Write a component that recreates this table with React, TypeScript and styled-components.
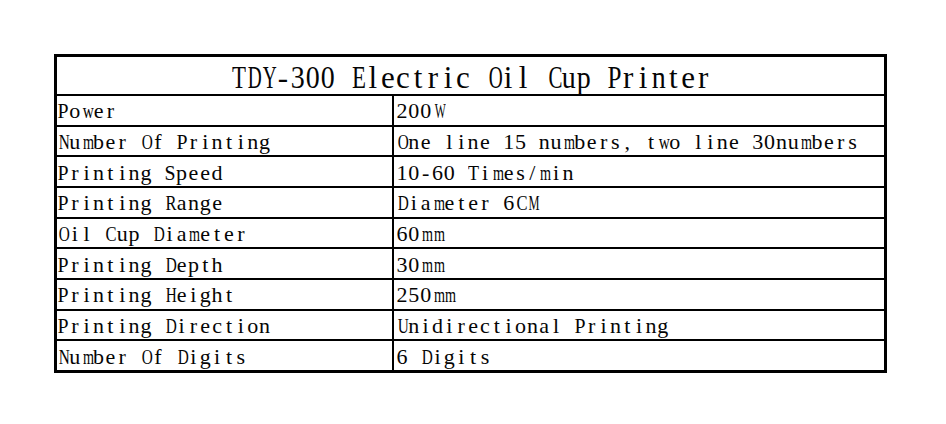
import React from "react";
import styled, { createGlobalStyle } from "styled-components";

const GlobalStyle = createGlobalStyle`
  html, body {
    margin: 0;
    padding: 0;
    background: #ffffff;
  }
  body {
    width: 946px;
    height: 424px;
    overflow: hidden;
  }
`;

const Page = styled.div`
  padding: 54px 0 0 54px;
  box-sizing: border-box;
  width: 946px;
  height: 424px;
  font-family: "Liberation Serif", "Times New Roman", serif;
  color: #050505;
`;

const Table = styled.div`
  width: 833px;
  box-sizing: border-box;
  border: 3px solid #000;
  display: flex;
  flex-direction: column;
`;

const Title = styled.div`
  height: 37px;
  display: flex;
  align-items: center;
  justify-content: center;
  font-size: 31px;
  line-height: 1;
  border-bottom: 2px solid #000;
`;

const Row = styled.div<{ $last?: boolean }>`
  display: grid;
  grid-template-columns: 337px 1fr;
  height: 28.67px;
  border-bottom: ${(p) => (p.$last ? "none" : "2px solid #000")};
`;

const Cell = styled.div<{ $divider?: boolean; $pad: number }>`
  display: flex;
  align-items: center;
  padding-left: ${(p) => p.$pad}px;
  font-size: 22px;
  line-height: 1;
  border-right: ${(p) => (p.$divider ? "2px solid #000" : "none")};
  overflow: hidden;
  white-space: nowrap;
`;

const Line = styled.span<{ $shift: number }>`
  display: inline-flex;
  transform: translateY(${(p) => p.$shift}px);
`;

const Glyph = styled.span<{ $cell: number }>`
  display: inline-block;
  width: ${(p) => p.$cell}px;
  text-align: center;
  white-space: pre;
  transform-origin: center;
`;

// Times-metric advance widths (em) for the characters in use
const WIDTHS: Record<string, number> = {
  " ": 0.25, ",": 0.25, "-": 0.333, "/": 0.278,
  A: 0.722, B: 0.667, C: 0.667, D: 0.722, E: 0.611, F: 0.556, G: 0.722,
  H: 0.722, I: 0.333, L: 0.611, M: 0.889, N: 0.722, O: 0.722, P: 0.556,
  R: 0.667, S: 0.556, T: 0.611, U: 0.722, W: 0.944, Y: 0.722,
  a: 0.444, b: 0.5, c: 0.444, d: 0.5, e: 0.444, f: 0.333, g: 0.5, h: 0.5,
  i: 0.278, l: 0.278, m: 0.778, n: 0.5, o: 0.5, p: 0.5, r: 0.333, s: 0.389,
  t: 0.278, u: 0.5, w: 0.722,
};

function MonoText({
  text,
  cell,
  size,
  shift,
}: {
  text: string;
  cell: number;
  size: number;
  shift: number;
}) {
  return (
    <Line $shift={shift}>
      {Array.from(text).map((ch, i) => {
        const w = (WIDTHS[ch] ?? 0.5) * size;
        const limit = cell * 0.93;
        const s = w > limit ? limit / w : 1;
        return (
          <Glyph
            key={i}
            $cell={cell}
            style={s < 1 ? { transform: `scaleX(${s.toFixed(3)})` } : undefined}
          >
            {ch}
          </Glyph>
        );
      })}
    </Line>
  );
}

const rows: [string, string][] = [
  ["Power", "200W"],
  ["Number Of Printing", "One line 15 numbers, two line 30numbers"],
  ["Printing Speed", "10-60 Times/min"],
  ["Printing Range", "Diameter 6CM"],
  ["Oil Cup Diameter", "60mm"],
  ["Printing Depth", "30mm"],
  ["Printing Height", "250mm"],
  ["Printing Direction", "Unidirectional Printing"],
  ["Number Of Digits", "6 Digits"],
];

export default function App() {
  return (
    <>
      <GlobalStyle />
      <Page>
        <Table>
          <Title>
            <MonoText
              text="TDY-300 Electric Oil Cup Printer"
              cell={15.03}
              size={31}
              shift={2}
            />
          </Title>
          {rows.map(([k, v], i) => (
            <Row key={k} $last={i === rows.length - 1}>
              <Cell $divider $pad={0}>
                <MonoText text={k} cell={11.87} size={22} shift={1} />
              </Cell>
              <Cell $pad={2}>
                <MonoText text={v} cell={11.87} size={22} shift={1} />
              </Cell>
            </Row>
          ))}
        </Table>
      </Page>
    </>
  );
}
